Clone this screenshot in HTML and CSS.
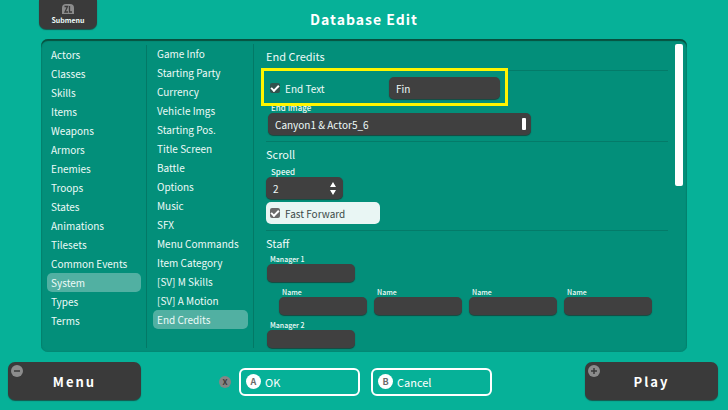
FILE: index.html
```html
<!DOCTYPE html>
<html lang="en">
<head>
    <meta charset="UTF-8">
    <meta name="viewport" content="width=device-width, initial-scale=1.0">
    <title>Database Edit</title>
    <link rel="stylesheet" href="styles.css">
</head>
<body>

    <!-- Top bar -->
    <header class="top-bar">
        <button class="submenu-btn" type="button">
            <svg class="zl-icon" viewBox="0 0 12 10" aria-hidden="true">
                <path d="M0 10V4Q0 0 4 0H8Q12 0 12 4V10Z" fill="#8c8c8c"/>
                <path d="M2.5 2.5H5.5L3 8H6M7.5 2V8H10" fill="none" stroke="#3a3a3a" stroke-width="1.3"/>
            </svg>
            Submenu
        </button>
        <h1>Database Edit</h1>
    </header>

    <!-- Main panel -->
    <main class="panel">
        <nav class="menu">
            <a href="#">Actors</a>
            <a href="#">Classes</a>
            <a href="#">Skills</a>
            <a href="#">Items</a>
            <a href="#">Weapons</a>
            <a href="#">Armors</a>
            <a href="#">Enemies</a>
            <a href="#">Troops</a>
            <a href="#">States</a>
            <a href="#">Animations</a>
            <a href="#">Tilesets</a>
            <a href="#">Common Events</a>
            <a href="#" class="active">System</a>
            <a href="#">Types</a>
            <a href="#">Terms</a>
        </nav>

        <nav class="menu system-menu">
            <a href="#">Game Info</a>
            <a href="#">Starting Party</a>
            <a href="#">Currency</a>
            <a href="#">Vehicle Imgs</a>
            <a href="#">Starting Pos.</a>
            <a href="#">Title Screen</a>
            <a href="#">Battle</a>
            <a href="#">Options</a>
            <a href="#">Music</a>
            <a href="#">SFX</a>
            <a href="#">Menu Commands</a>
            <a href="#">Item Category</a>
            <a href="#">[SV] M Skills</a>
            <a href="#">[SV] A Motion</a>
            <a href="#" class="active">End Credits</a>
        </nav>

        <div class="content">
            <section>
                <h2 class="lined">End Credits</h2>
                <div class="end-text">
                    <label class="check">
                        <input type="checkbox" checked>
                        End Text
                    </label>
                    <input class="field" type="text" value="Fin" aria-label="End text">
                </div>
                <label class="caption" for="endImage">End Image</label>
                <div class="image-select">
                    <select class="field" id="endImage">
                        <option>Canyon1 &amp; Actor5_6</option>
                    </select>
                </div>
            </section>

            <section>
                <h2>Scroll</h2>
                <label class="caption" for="speed">Speed</label>
                <div class="speed">
                    <input class="field" type="number" id="speed" value="2">
                    <svg class="arrows" viewBox="0 0 6 13" aria-hidden="true">
                        <path d="M3 0L6 5H0ZM3 13L0 8H6Z" fill="#fff"/>
                    </svg>
                </div>
                <label class="check fast-forward">
                    <input type="checkbox" checked>
                    Fast Forward
                </label>
            </section>

            <section>
                <h2>Staff</h2>
                <div class="staff">
                    <label>Manager 1<input class="field" type="text"></label>
                </div>
                <div class="staff names">
                    <label>Name<input class="field" type="text"></label>
                    <label>Name<input class="field" type="text"></label>
                    <label>Name<input class="field" type="text"></label>
                    <label>Name<input class="field" type="text"></label>
                </div>
                <div class="staff">
                    <label>Manager 2<input class="field" type="text"></label>
                </div>
            </section>
        </div>

        <div class="scrollbar"><div class="thumb"></div></div>
    </main>

    <!-- Bottom buttons -->
    <footer class="bottom-bar">
        <button class="big-btn" type="button">
            <svg class="sign" viewBox="0 0 12 12" aria-hidden="true">
                <circle cx="6" cy="6" r="6" fill="#8c8c8c"/>
                <path d="M3 6H9" stroke="#3a3a3a" stroke-width="1.5"/>
            </svg>
            Menu
        </button>
        <div class="actions">
            <span class="key small">X</span>
            <button class="action-btn" type="button"><span class="key">A</span>OK</button>
            <button class="action-btn" type="button"><span class="key">B</span>Cancel</button>
        </div>
        <button class="big-btn" type="button">
            <svg class="sign" viewBox="0 0 12 12" aria-hidden="true">
                <circle cx="6" cy="6" r="6" fill="#8c8c8c"/>
                <path d="M3 6H9M6 3V9" stroke="#3a3a3a" stroke-width="1.5"/>
            </svg>
            Play
        </button>
    </footer>

</body>
</html>
```
FILE: styles.css
```css
*, *::before, *::after {
    box-sizing: border-box;
}

body {
    margin: 0;
    height: 100vh;
    display: flex;
    flex-direction: column;
    background-color: #06b198;
    color: #eefaf8;
    font-family: "Noto Sans CJK JP", sans-serif;
    font-size: 10px;
}

button, input, select {
    font: inherit;
    color: inherit;
    border: none;
    margin: 0;
}

button {
    cursor: pointer;
}

h1, h2 {
    margin: 0;
}

/* Top bar */
.top-bar {
    display: grid;
    grid-template-columns: 1fr auto 1fr;
    align-items: start;
    height: 39px;
    padding: 0 39px;
    flex-shrink: 0;
}

.submenu-btn {
    display: flex;
    flex-direction: column;
    align-items: center;
    justify-self: start;
    width: 58px;
    height: 29px;
    padding: 4px 0 0;
    background-color: #3a3a3a;
    border-radius: 0 0 7px 7px;
    box-shadow: 0 1px 1px #16574d;
    font-size: 7px;
    font-weight: 700;
    line-height: 13px;
}

.zl-icon {
    width: 12px;
    height: 10px;
    flex-shrink: 0;
}

h1 {
    color: #fff;
    font-size: 14px;
    font-weight: 700;
    line-height: 38px;
    letter-spacing: 1px;
}

/* Main panel */
.panel {
    flex: 1;
    min-height: 0;
    display: flex;
    margin: 0 41px;
    background-color: #038f7a;
    border-radius: 7px;
    box-shadow: inset 0 2px 1px #07503f, inset 0 0 2px #067765;
    overflow: hidden;
}

.menu {
    flex: 0 0 106px;
    margin: 6px 0 4px;
    padding: 0 5px 0 6px;
    border-right: 1px solid #037966;
}

.menu a {
    display: block;
    padding: 0 4px;
    border-radius: 5px;
    color: inherit;
    line-height: 19px;
    text-decoration: none;
    white-space: nowrap;
}

.menu .active {
    background-color: #51b0a2;
}

.system-menu {
    flex-basis: 107px;
    margin-top: 5px;
}

.content {
    flex: 1;
    min-width: 0;
    margin-right: 1px;
    padding: 5px 6px 0 12px;
}

section {
    padding: 3px 0 6px;
    border-bottom: 1px solid #047b69;
}

section:last-child {
    border-bottom: none;
}

h2 {
    padding-bottom: 2px;
    font-size: 11px;
    font-weight: 400;
    line-height: 18px;
}

.lined {
    padding-bottom: 5px;
    border-bottom: 1px solid #047b69;
}

.field {
    display: block;
    height: 22px;
    padding: 0 7px;
    background-color: #404040;
    border-radius: 5px;
    box-shadow: 0 1px 1px #17483f;
    outline: none;
    appearance: none;
}

.check {
    display: flex;
    align-items: center;
    gap: 5px;
    padding-left: 4px;
}

.check input {
    appearance: none;
    display: grid;
    place-items: center;
    width: 10px;
    height: 10px;
    background-color: #32524d;
    border-radius: 2px;
}

.check input:checked::before {
    content: "";
    width: 8px;
    height: 5px;
    border-left: 2px solid #fff;
    border-bottom: 2px solid #fff;
    transform: translateY(-1px) rotate(-45deg);
}

/* End text row with the highlight frame over it */
.end-text {
    position: relative;
    display: flex;
    margin-top: 6px;
}

.end-text::after {
    content: "";
    position: absolute;
    left: -5px;
    top: -9px;
    width: 247px;
    height: 38px;
    border: 3px solid #fff500;
    pointer-events: none;
}

.end-text .check {
    width: 123px;
}

.end-text .field {
    width: 111px;
}

.caption {
    display: block;
    margin-top: 2px;
    padding-left: 5px;
    font-size: 8px;
    font-weight: 500;
    line-height: 10px;
}

.end-text + .caption {
    margin-top: 4px;
}

.image-select {
    display: flex;
    align-items: center;
    width: 263px;
    margin-left: 2px;
    position: relative;
}

.image-select .field {
    width: 100%;
}

.image-select::after {
    content: "";
    position: absolute;
    right: 5px;
    width: 4px;
    height: 12px;
    background-color: #fff;
    border-radius: 1px;
}

.speed {
    position: relative;
    display: flex;
    align-items: center;
    width: 77px;
}

.speed .field {
    width: 100%;
    appearance: textfield;
}

.arrows {
    position: absolute;
    right: 7px;
    width: 6px;
    height: 13px;
}

.fast-forward {
    width: 114px;
    height: 22px;
    margin-top: 3px;
    background-color: #e9f6f4;
    border-radius: 5px;
    color: #3c4a48;
}

.fast-forward input {
    background-color: #6a6a6a;
}

.staff {
    display: flex;
    gap: 7px;
    margin-left: 1px;
    margin-bottom: 5px;
    font-size: 7px;
    font-weight: 500;
    line-height: 10px;
}

.staff label {
    width: 88px;
    text-indent: 3px;
}

.staff .field {
    width: 100%;
    height: 18px;
}

.names {
    margin-left: 13px;
}

.scrollbar {
    flex: 0 0 8px;
    margin: 5px 4px 5px 0;
}

.thumb {
    height: 47%;
    background-color: #fff;
    border-radius: 2px;
}

/* Bottom buttons */
.bottom-bar {
    display: flex;
    justify-content: space-between;
    height: 58px;
    padding: 10px 10px 9px 8px;
    flex-shrink: 0;
}

.big-btn {
    position: relative;
    width: 133px;
    height: 38px;
    background-color: #3a3a3a;
    border-radius: 7px;
    box-shadow: 0 1px 1px #16574d;
    color: #fff;
    font-size: 13px;
    font-weight: 700;
    letter-spacing: 2px;
}

.sign {
    position: absolute;
    left: 3px;
    top: 3px;
    width: 12px;
    height: 12px;
}

.actions {
    display: flex;
    align-items: center;
    gap: 11px;
    margin-right: 15px;
}

.action-btn {
    display: flex;
    align-items: center;
    gap: 4px;
    width: 121px;
    height: 28px;
    padding: 0 5px;
    background: none;
    border: 2px solid #fff;
    border-radius: 6px;
    color: #fff;
    font-size: 11px;
}

.key {
    width: 15px;
    height: 15px;
    background-color: #fff;
    border-radius: 50%;
    color: #6a6a6a;
    font-size: 9px;
    font-weight: 700;
    line-height: 15px;
    text-align: center;
}

.small {
    width: 12px;
    height: 12px;
    margin-right: -3px;
    background-color: #858585;
    color: #3a3a3a;
    font-size: 8px;
    line-height: 12px;
}
```
